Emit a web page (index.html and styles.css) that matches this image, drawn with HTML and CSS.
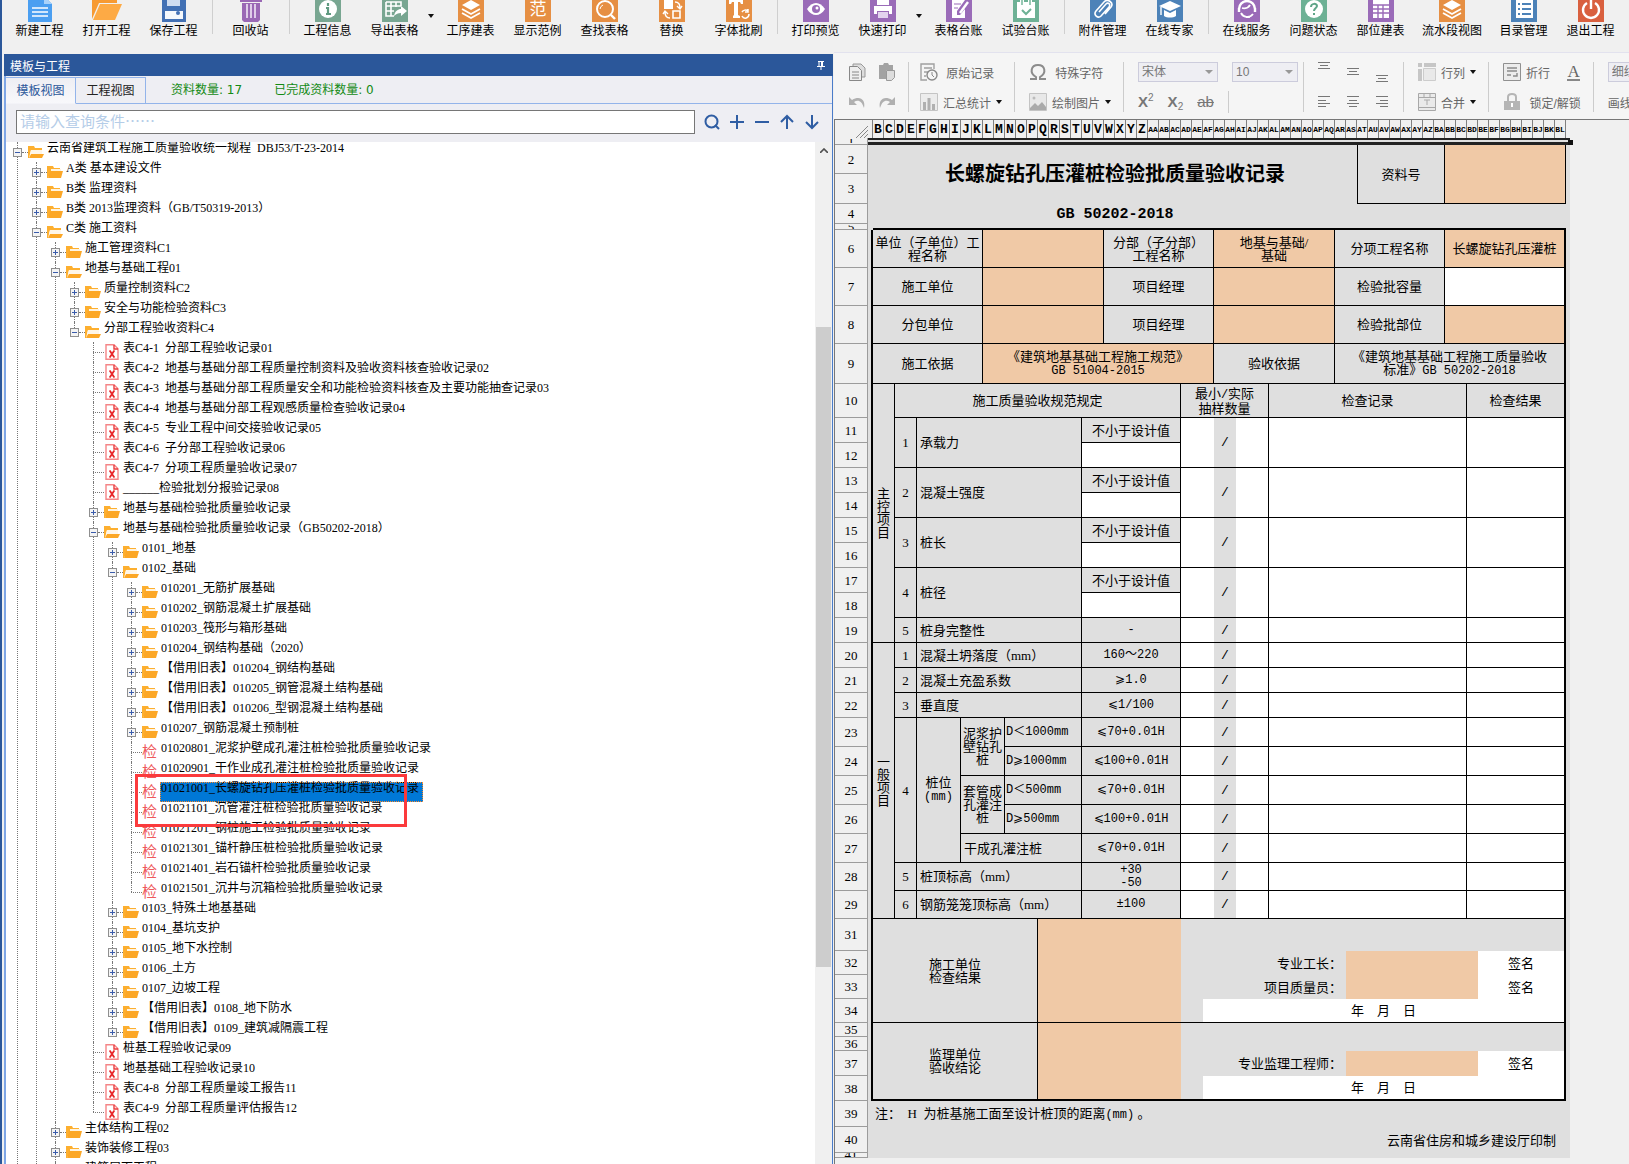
FILE: index.html
```
<!DOCTYPE html>
<html lang="zh-CN">
<head>
  <meta charset="utf-8">
  <title>工程资料管理</title>
  <link rel="stylesheet" href="styles.css">
</head>

<body>
  <svg class="defs" aria-hidden="true">
    <symbol id="folder" viewBox="0 0 16 14">
      <path d="M0 1h6l1 2h6v3H4L1 13H0z" fill="#fdaf2f"/>
      <path d="M4 4h10v3H4z" fill="#fff3df"/>
      <path d="M3 6h13l-2 7H1z" fill="#fca726"/>
    </symbol>
    <symbol id="folder-open" viewBox="0 0 16 14">
      <path d="M0 1h6l1 2h7v2H3L1 13H0z" fill="#fdaf2f"/>
      <path d="M3 5h11v4H2z" fill="#fff6e8"/>
      <path d="M3 9h13l-2 4H1z" fill="#fca726"/>
    </symbol>
    <symbol id="sheet-file" viewBox="0 0 16 16">
      <path d="M2 .7h8l4 4v10.600H2z" fill="#fff" stroke="#f58587" stroke-width="1.4"/>
      <path d="M10 1v4h4" fill="none" stroke="#ea3a3c" stroke-width="1.4"/>
      <path d="M6 7l4 6M10 7l-4 6" stroke="#e8262a" stroke-width="1.8"/>
      <path d="M5 7h2M9 7h2M5 13h2M9 13h2" stroke="#e8262a"/>
    </symbol>
    <symbol id="layers" viewBox="0 0 26 26">
      <path d="M13 4l9 5-9 5-9-5z" fill="#fff"/>
      <path d="M4 13l9 5 9-5M4 17l9 5 9-5" fill="none" stroke="#fff" stroke-width="1.8"/>
    </symbol>
  </svg>

  <header class="toolbar">
    <button class="tool"><svg viewBox="0 0 26 26"><path d="M1 0h16l8 8v18H1z" fill="#4b9ff1"/><path d="M17 0l8 8h-8z" fill="#a9d2fa"/><path d="M5 12h16M5 16h16M5 20h16" stroke="#fff" stroke-width="1.6"/></svg>新建工程</button>
    <button class="tool"><svg class="wide" viewBox="0 0 32 26"><path d="M1 0h10l3 3h12v4H8L1 23z" fill="#f79a32"/><path d="M9 8h22l-7 16H2z" fill="#fdaa45"/></svg>打开工程</button>
    <button class="tool"><svg viewBox="0 0 26 26"><path d="M1 1h22l2 3v22H1z" fill="#4270b4"/><path d="M6 1h13v9H6z" fill="#cfdcf0"/><path d="M4 15h18v8H4z" fill="#f5f8fc"/><path d="M17 15a2 2 0 1 1 0 4 2 2 0 0 1 0-4z" fill="#4270b4"/></svg>保存工程</button>
    <span class="tool-sep"></span>
    <button class="tool"><svg viewBox="0 0 26 26"><path d="M2 2h22v4H2zM4 7h18v17l-2 2H6l-2-2z" fill="#9a68b5"/><path d="M9 8v14M13 8v14M17 8v14" stroke="#f0e6f6" stroke-width="1.6"/></svg>回收站</button>
    <span class="tool-sep"></span>
    <button class="tool"><svg class="green" viewBox="0 0 26 26"><circle cx="13" cy="13" r="9" fill="#fff"/><path d="M13 7v3M11 12h2v6M11 18h5" fill="none" stroke="#5f9a80" stroke-width="2.2"/></svg>工程信息</button>
    <button class="tool"><svg class="green" viewBox="0 0 26 26"><path d="M4 6h15v4M4 6v14h8M4 10h15M4 15h8M9 6v14M14 6v5" fill="none" stroke="#fff" stroke-width="1.6"/><path d="M12 20c1-5 4-7 7-7v-3l6 5-6 5v-3c-3 0-5 1-7 3z" fill="#fff"/></svg>导出表格</button>
    <span class="tool-drop"><i class="caret"></i></span>
    <button class="tool"><svg class="orange" viewBox="0 0 26 26"><use href="#layers"/></svg>工序建表</button>
    <button class="tool"><svg class="orange" viewBox="0 0 26 26"><text x="13" y="19" text-anchor="middle" font-size="17" fill="#fff">范</text></svg>显示范例</button>
    <button class="tool"><svg class="orange" viewBox="0 0 26 26"><circle cx="13" cy="13" r="8" fill="none" stroke="#fff" stroke-width="2"/><path d="M19 19l4 4" stroke="#fff" stroke-width="2.4"/><path d="M8 13a5 5 0 0 1 3-4" fill="none" stroke="#fff"/></svg>查找表格</button>
    <button class="tool"><svg class="orange" viewBox="0 0 26 26"><path d="M5 4h9v9H5z" fill="#fff"/><path d="M14 15h7v7h-7z" fill="none" stroke="#fff" stroke-width="1.6"/><path d="M16 6c4 0 5 2 5 6M18 10l3 3 2-3M11 22c-4 0-5-2-5-6M4 18l2-3 3 3" fill="none" stroke="#fff" stroke-width="1.4"/></svg>替换</button>
    <button class="tool"><svg class="orange" viewBox="0 0 26 26"><path d="M3 4h14v4h-2l-1-2h-2v13l2 1v2H7v-2l1-1V6H6L5 8H3z" fill="#fff"/><path d="M22 15a4 4 0 0 0-6 1M23 18c0 4-5 6-7 2M22 13v3h-3" fill="none" stroke="#fff" stroke-width="1.5"/></svg>字体批刷</button>
    <span class="tool-sep"></span>
    <button class="tool"><svg class="purple" viewBox="0 0 26 26"><path d="M4 13c5-8 13-8 18 0-5 8-13 8-18 0z" fill="#fff"/><circle cx="13" cy="13" r="4" fill="#9a6bb8"/><circle cx="14" cy="12" r="1.5" fill="#fff"/></svg>打印预览</button>
    <button class="tool"><svg class="purple" viewBox="0 0 26 26"><path d="M7 4h12v5H7zM4 10h18v8h-3v-3H7v3H4z" fill="#fff"/><path d="M8 16h10v6H8z" fill="#e3d3ee"/></svg>快速打印</button>
    <span class="tool-drop"><i class="caret"></i></span>
    <button class="tool"><svg class="purple" viewBox="0 0 26 26"><path d="M6 4h13l-8 11v4h3l5-6v9H6z" fill="#fff"/><path d="M8 8h7M8 12h4" stroke="#9a6bb8" stroke-width="1.2"/><path d="M14 17l8-11" stroke="#fff" stroke-width="2.4"/></svg>表格台账</button>
    <button class="tool"><svg class="teal" viewBox="0 0 26 26"><path d="M4 6h18v16H4z" fill="#fff"/><path d="M9 3v6M17 3v6" stroke="#fff" stroke-width="4"/><path d="M9 3v6M17 3v6" stroke="#6db195" stroke-width="1.4"/><path d="M9 14l4 4 5-5" fill="none" stroke="#6db195" stroke-width="2"/></svg>试验台账</button>
    <span class="tool-sep"></span>
    <button class="tool"><svg class="blue" viewBox="0 0 26 26"><path d="M9 16l7-8c2-2 5 0 3 3l-8 9c-3 3-8-1-5-5l8-9c4-4 10 1 7 5l-6 7" fill="none" stroke="#fff" stroke-width="1.6"/></svg>附件管理</button>
    <button class="tool"><svg class="blue" viewBox="0 0 26 26"><path d="M13 5l11 5-11 5-11-5z" fill="#fff"/><path d="M7 14v6c3 2 9 2 12 0v-6l-6 3z" fill="#fff"/><path d="M4 11v8" stroke="#fff" stroke-width="1.4"/></svg>在线专家</button>
    <span class="tool-sep"></span>
    <button class="tool"><svg class="purple" viewBox="0 0 26 26"><path d="M5 13a8 8 0 0 1 16 0M5 12v4M21 12v4" fill="none" stroke="#fff" stroke-width="2.4"/><path d="M8 12c4 1 7-1 8-3M7 17c2 4 8 6 12 1M12 21h4" fill="none" stroke="#fff" stroke-width="1.8"/></svg>在线服务</button>
    <button class="tool"><svg class="teal" viewBox="0 0 26 26"><circle cx="13" cy="13" r="9" fill="#fff"/><path d="M10 11c0-4 6-4 6-1 0 2-3 2-3 5M13 17v2" fill="none" stroke="#5fa588" stroke-width="2"/></svg>问题状态</button>
    <button class="tool"><svg class="purple" viewBox="0 0 26 26"><path d="M5 4h16v18H5z" fill="#fff"/><path d="M5 9h16M5 13h16M5 17h16M10 9v13M15 9v13" stroke="#9a6bb8" stroke-width="1.4"/></svg>部位建表</button>
    <button class="tool tool-long"><svg class="orange" viewBox="0 0 26 26"><use href="#layers"/></svg>流水段视图</button>
    <button class="tool"><svg class="blue" viewBox="0 0 26 26"><path d="M5 4h17v18H5z" fill="#fff"/><path d="M7 8h2M7 13h2M7 18h2M11 8h9M11 13h9M11 18h9" stroke="#4c82b8" stroke-width="2"/></svg>目录管理</button>
    <button class="tool"><svg class="red" viewBox="0 0 26 26"><path d="M9 7a8 8 0 1 0 8 0M13 4v9" fill="none" stroke="#fff" stroke-width="2.4"/></svg>退出工程</button>
  </header>

  <main class="workspace">
    <section class="side">
      <div class="side-title">
        <span>模板与工程</span>
        <svg width="8" height="9" viewBox="0 0 8 9"><path d="M1 .5h6M2 0v5M5.500 0v5M0 5.500h8M4 5v4" stroke="#fff" fill="none"/><path d="M4 0h2v5H4z" fill="#fff"/></svg>
      </div>
      <div class="tabs">
        <button class="tab active">模板视图</button>
        <button class="tab">工程视图</button>
        <span class="count">资料数量: 17</span>
        <span class="count">已完成资料数量: 0</span>
      </div>
      <div class="search">
        <input type="text" placeholder="请输入查询条件……" aria-label="查询条件">
        <button class="mini"><svg viewBox="0 0 16 16"><circle cx="7.500" cy="7.500" r="6"/><path d="M11 11l4 4"/></svg></button>
        <button class="mini"><svg viewBox="0 0 16 16"><path d="M8 1v14M1 8h14"/></svg></button>
        <button class="mini"><svg viewBox="0 0 16 16"><path d="M1 8h14"/></svg></button>
        <button class="mini"><svg viewBox="0 0 16 16"><path d="M8 15V2M2 8l6-6 6 6"/></svg></button>
        <button class="mini"><svg viewBox="0 0 16 16"><path d="M8 1v13M2 8l6 6 6-6"/></svg></button>
      </div>

      <div class="tree-box">
        <ul class="tree">
          <li><div class="row"><button class="toggle"></button><svg><use href="#folder-open"/></svg><span>云南省建筑工程施工质量验收统一规程&nbsp; DBJ53/T-23-2014</span></div>
            <ul>
              <li><div class="row"><button class="toggle plus"></button><svg><use href="#folder"/></svg><span>A类 基本建设文件</span></div></li>
              <li><div class="row"><button class="toggle plus"></button><svg><use href="#folder"/></svg><span>B类 监理资料</span></div></li>
              <li><div class="row"><button class="toggle plus"></button><svg><use href="#folder"/></svg><span>B类 2013监理资料（GB/T50319-2013）</span></div></li>
              <li><div class="row"><button class="toggle"></button><svg><use href="#folder-open"/></svg><span>C类 施工资料</span></div>
                <ul>
                  <li><div class="row"><button class="toggle plus"></button><svg><use href="#folder"/></svg><span>施工管理资料C1</span></div></li>
                  <li><div class="row"><button class="toggle"></button><svg><use href="#folder-open"/></svg><span>地基与基础工程01</span></div>
                    <ul>
                      <li><div class="row"><button class="toggle plus"></button><svg><use href="#folder"/></svg><span>质量控制资料C2</span></div></li>
                      <li><div class="row"><button class="toggle plus"></button><svg><use href="#folder"/></svg><span>安全与功能检验资料C3</span></div></li>
                      <li class="last"><div class="row"><button class="toggle"></button><svg><use href="#folder-open"/></svg><span>分部工程验收资料C4</span></div>
                        <ul>
                          <li><div class="row leaf"><svg><use href="#sheet-file"/></svg><span>表C4-1&nbsp; 分部工程验收记录01</span></div></li>
                          <li><div class="row leaf"><svg><use href="#sheet-file"/></svg><span>表C4-2&nbsp; 地基与基础分部工程质量控制资料及验收资料核查验收记录02</span></div></li>
                          <li><div class="row leaf"><svg><use href="#sheet-file"/></svg><span>表C4-3&nbsp; 地基与基础分部工程质量安全和功能检验资料核查及主要功能抽查记录03</span></div></li>
                          <li><div class="row leaf"><svg><use href="#sheet-file"/></svg><span>表C4-4&nbsp; 地基与基础分部工程观感质量检查验收记录04</span></div></li>
                          <li><div class="row leaf"><svg><use href="#sheet-file"/></svg><span>表C4-5&nbsp; 专业工程中间交接验收记录05</span></div></li>
                          <li><div class="row leaf"><svg><use href="#sheet-file"/></svg><span>表C4-6&nbsp; 子分部工程验收记录06</span></div></li>
                          <li><div class="row leaf"><svg><use href="#sheet-file"/></svg><span>表C4-7&nbsp; 分项工程质量验收记录07</span></div></li>
                          <li><div class="row leaf"><svg><use href="#sheet-file"/></svg><span>______检验批划分报验记录08</span></div></li>
                          <li><div class="row"><button class="toggle plus"></button><svg><use href="#folder"/></svg><span>地基与基础检验批质量验收记录</span></div></li>
                          <li><div class="row"><button class="toggle"></button><svg><use href="#folder-open"/></svg><span>地基与基础检验批质量验收记录（GB50202-2018）</span></div>
                            <ul>
                              <li><div class="row"><button class="toggle plus"></button><svg><use href="#folder"/></svg><span>0101_地基</span></div></li>
                              <li><div class="row"><button class="toggle"></button><svg><use href="#folder-open"/></svg><span>0102_基础</span></div>
                                <ul>
                                  <li><div class="row"><button class="toggle plus"></button><svg><use href="#folder"/></svg><span>010201_无筋扩展基础</span></div></li>
                                  <li><div class="row"><button class="toggle plus"></button><svg><use href="#folder"/></svg><span>010202_钢筋混凝土扩展基础</span></div></li>
                                  <li><div class="row"><button class="toggle plus"></button><svg><use href="#folder"/></svg><span>010203_筏形与箱形基础</span></div></li>
                                  <li><div class="row"><button class="toggle plus"></button><svg><use href="#folder"/></svg><span>010204_钢结构基础（2020）</span></div></li>
                                  <li><div class="row"><button class="toggle plus"></button><svg><use href="#folder"/></svg><span>【借用旧表】010204_钢结构基础</span></div></li>
                                  <li><div class="row"><button class="toggle plus"></button><svg><use href="#folder"/></svg><span>【借用旧表】010205_钢管混凝土结构基础</span></div></li>
                                  <li><div class="row"><button class="toggle plus"></button><svg><use href="#folder"/></svg><span>【借用旧表】010206_型钢混凝土结构基础</span></div></li>
                                  <li><div class="row"><button class="toggle plus"></button><svg><use href="#folder"/></svg><span>010207_钢筋混凝土预制桩</span></div></li>
                                  <li><div class="row leaf"><b>检</b><span>01020801_泥浆护壁成孔灌注桩检验批质量验收记录</span></div></li>
                                  <li><div class="row leaf"><b>检</b><span>01020901_干作业成孔灌注桩检验批质量验收记录</span></div></li>
                                  <li><div class="row leaf"><b>检</b><span class="selected">01021001_长螺旋钻孔压灌桩检验批质量验收记录</span></div><div class="callout"></div></li>
                                  <li><div class="row leaf"><b>检</b><span>01021101_沉管灌注桩检验批质量验收记录</span></div></li>
                                  <li><div class="row leaf"><b>检</b><span>01021201_钢桩施工检验批质量验收记录</span></div></li>
                                  <li><div class="row leaf"><b>检</b><span>01021301_锚杆静压桩检验批质量验收记录</span></div></li>
                                  <li><div class="row leaf"><b>检</b><span>01021401_岩石锚杆检验批质量验收记录</span></div></li>
                                  <li class="last"><div class="row leaf"><b>检</b><span>01021501_沉井与沉箱检验批质量验收记录</span></div></li>
                                </ul>
                              </li>
                              <li><div class="row"><button class="toggle plus"></button><svg><use href="#folder"/></svg><span>0103_特殊土地基基础</span></div></li>
                              <li><div class="row"><button class="toggle plus"></button><svg><use href="#folder"/></svg><span>0104_基坑支护</span></div></li>
                              <li><div class="row"><button class="toggle plus"></button><svg><use href="#folder"/></svg><span>0105_地下水控制</span></div></li>
                              <li><div class="row"><button class="toggle plus"></button><svg><use href="#folder"/></svg><span>0106_土方</span></div></li>
                              <li><div class="row"><button class="toggle plus"></button><svg><use href="#folder"/></svg><span>0107_边坡工程</span></div></li>
                              <li><div class="row"><button class="toggle plus"></button><svg><use href="#folder"/></svg><span>【借用旧表】0108_地下防水</span></div></li>
                              <li class="last"><div class="row"><button class="toggle plus"></button><svg><use href="#folder"/></svg><span>【借用旧表】0109_建筑减隔震工程</span></div></li>
                            </ul>
                          </li>
                          <li><div class="row leaf"><svg><use href="#sheet-file"/></svg><span>桩基工程验收记录09</span></div></li>
                          <li><div class="row leaf"><svg><use href="#sheet-file"/></svg><span>地基基础工程验收记录10</span></div></li>
                          <li><div class="row leaf"><svg><use href="#sheet-file"/></svg><span>表C4-8&nbsp; 分部工程质量竣工报告11</span></div></li>
                          <li class="last"><div class="row leaf"><svg><use href="#sheet-file"/></svg><span>表C4-9&nbsp; 分部工程质量评估报告12</span></div></li>
                        </ul>
                      </li>
                    </ul>
                  </li>
                  <li><div class="row"><button class="toggle plus"></button><svg><use href="#folder"/></svg><span>主体结构工程02</span></div></li>
                  <li><div class="row"><button class="toggle plus"></button><svg><use href="#folder"/></svg><span>装饰装修工程03</span></div></li>
                  <li><div class="row"><button class="toggle plus"></button><svg><use href="#folder"/></svg><span>建筑屋面工程04</span></div></li>
                </ul>
              </li>
            </ul>
          </li>
        </ul>
        <div class="scrollbar">
          <svg width="8" height="5" viewBox="0 0 8 5"><path d="M0 5l4-4 4 4" fill="none" stroke="#505050" stroke-width="1.6"/></svg>
          <div class="thumb"></div>
        </div>
      </div>
    </section>

    <section class="editor">
      <div class="format-bar">
        <div class="group">
          <div class="line clip">
            <button><svg viewBox="0 0 18 18"><path d="M5 4V1h8l4 4v9h-3" fill="#ddd" stroke="#999"/><path d="M1.500 3.500h8l4 4v10h-12z" fill="#eee" stroke="#888"/><path d="M4 9h7M4 12h7M4 15h7" stroke="#888"/></svg></button>
            <button><svg viewBox="0 0 18 18"><path d="M1 2h4l1-2h4l1 2h4v5H8v9H1z" fill="#a3a3a3"/><path d="M8.500 7.500h8v7l-3 3h-5z" fill="#ddd" stroke="#999"/></svg></button>
          </div>
          <div class="line clip">
            <button><svg viewBox="0 0 18 18"><path d="M1 4v8h8L6 9c4-3 8-1 10 6 2-8-4-13-12-8z" fill="#b0b0b0"/></svg></button>
            <button><svg viewBox="0 0 18 18"><path d="M17 4v8H9l3-3C8 6 4 8 2 15 0 7 6 2 14 7z" fill="#b0b0b0"/></svg></button>
          </div>
        </div>
        <div class="group near">
          <div class="line"><button><svg viewBox="0 0 18 18"><path d="M7 17H1V1h13v5M4 5h8M4 9h4M4 13h2" fill="none" stroke="#a0a0a0" stroke-width="1.4"/><circle cx="12" cy="12" r="5" fill="#f5f5f5" stroke="#888" stroke-width="1.4"/><path d="M12 9v3l2 2" fill="none" stroke="#888"/></svg>&nbsp;原始记录</button></div>
          <div class="line"><button><svg viewBox="0 0 18 18"><path d="M.5.5h17v17H.5z" fill="#ececec" stroke="#c4c4c4"/><path d="M3 9h3v8H3zM7.500 5h3v12h-3zM12 11h3v6h-3z" fill="#b0b0b0"/></svg>汇总统计<i class="caret"></i></button></div>
        </div>
        <div class="group">
          <div class="line"><button><svg viewBox="0 0 18 18"><path d="M1 16h6v-2C0 10 2 2 9 2s9 8 2 12v2h6" fill="none" stroke="#8c8c8c" stroke-width="2"/></svg>&nbsp;特殊字符</button></div>
          <div class="line"><button><svg viewBox="0 0 18 18"><path d="M.5.5h17v17H.5z" fill="#e8e8e8" stroke="#c4c4c4"/><path d="M1 15l5-5 3 3 4-4 4 5v3H1z" fill="#aaa"/><circle cx="5" cy="5" r="1.500" fill="#bbb"/></svg>绘制图片<i class="caret"></i></button></div>
        </div>
        <div class="group fonts">
          <div class="line">
            <span class="select font-name"><select disabled aria-label="字体"><option>宋体</option></select></span>
            <span class="select font-size"><select disabled aria-label="字号"><option>10</option></select></span>
          </div>
          <div class="line marks">
            <button>X<sup>2</sup></button>
            <button>X<sub>2</sub></button>
            <button class="strike">ab</button>
            <span class="inner-sep"></span>
          </div>
        </div>
        <div class="group aligns">
          <div class="line">
            <button><svg class="a-top" viewBox="0 0 12 12"><path d="M0 .5h12M2 3.500h8M0 6.500h12"/></svg></button>
            <button><svg viewBox="0 0 12 12"><path d="M0 2.500h12M2 5.500h8M0 8.500h12"/></svg></button>
            <button><svg class="a-bottom" viewBox="0 0 12 12"><path d="M0 5.500h12M2 8.500h8M0 11.500h12"/></svg></button>
          </div>
          <div class="line">
            <button><svg viewBox="0 0 12 12"><path d="M0 .5h12M0 4.500h8M0 7.500h12M0 10.500h8"/></svg></button>
            <button><svg viewBox="0 0 12 12"><path d="M0 .5h12M2 4.500h8M0 7.500h12M2 10.500h8"/></svg></button>
            <button><svg viewBox="0 0 12 12"><path d="M0 .5h12M4 4.500h8M0 7.500h12M4 10.500h8"/></svg></button>
          </div>
        </div>
        <div class="group">
          <div class="line"><button><svg viewBox="0 0 18 18"><path d="M0 0h4v4H0zM6 0h12v4H6zM0 6h4v12H0z" fill="#c6c6c6"/><path d="M5.500 5.500h12v12h-12z" fill="#e9e9e9" stroke="#ccc"/></svg>行列<i class="caret"></i></button></div>
          <div class="line"><button><svg viewBox="0 0 18 18"><path d="M.5.500h17v17H.5zM.5 4.500h17M6 1v3M12 1v3M.5 14.500h17" fill="#eaeaea" stroke="#a8a8a8"/><path d="M6 7h6M9 7v5" stroke="#aaa"/></svg>合并<i class="caret"></i></button></div>
        </div>
        <div class="group">
          <div class="line"><button><svg viewBox="0 0 18 18"><path d="M.5.5h17v17H.5z" fill="#ececec" stroke="#909090"/><path d="M4 5h10M4 8h10M4 12h4M14 10v3h-4" fill="none" stroke="#8a8a8a" stroke-width="1.4"/></svg>折行</button><button class="font-color">A</button></div>
          <div class="line"><button><svg viewBox="0 0 18 18"><path d="M5 8V4c0-4 8-4 8 0v4" fill="none" stroke="#b5b5b5" stroke-width="2"/><path d="M1 8h16v9H1z" fill="#b5b5b5"/><path d="M9 10v4" stroke="#fff" stroke-width="2"/></svg>&nbsp;锁定/解锁</button></div>
        </div>
        <div class="group">
          <div class="line"><span class="select font-name"><select disabled aria-label="线型"><option>细线</option></select></span></div>
          <div class="line"><button>画线</button></div>
        </div>
      </div>

      <div class="sheet-box">
        <table class="sheet">
          <colgroup>
            <col class="c-head"><col class="c-left"><col class="c-unit" span="63"><col class="c-right">
          </colgroup>
          <tr class="letters">
            <td class="corner"><svg width="12" height="12" viewBox="0 0 12 12"><path d="M0 12L12 0M4 12l8-8M8 12l4-4" stroke="#888"/></svg></td>
            <th></th>
            <th>B</th><th>C</th><th>D</th><th>E</th><th>F</th><th>G</th><th>H</th><th>I</th><th>J</th><th>K</th><th>L</th><th>M</th><th>N</th><th>O</th><th>P</th><th>Q</th><th>R</th><th>S</th><th>T</th><th>U</th><th>V</th><th>W</th><th>X</th><th>Y</th><th>Z</th>
            <th class="two">AA</th><th class="two">AB</th><th class="two">AC</th><th class="two">AD</th><th class="two">AE</th><th class="two">AF</th><th class="two">AG</th><th class="two">AH</th><th class="two">AI</th><th class="two">AJ</th><th class="two">AK</th><th class="two">AL</th><th class="two">AM</th>
            <th class="two">AN</th><th class="two">AO</th><th class="two">AP</th><th class="two">AQ</th><th class="two">AR</th><th class="two">AS</th><th class="two">AT</th><th class="two">AU</th><th class="two">AV</th><th class="two">AW</th><th class="two">AX</th><th class="two">AY</th><th class="two">AZ</th>
            <th class="two">BA</th><th class="two">BB</th><th class="two">BC</th><th class="two">BD</th><th class="two">BE</th><th class="two">BF</th><th class="two">BG</th><th class="two">BH</th><th class="two">BI</th><th class="two">BJ</th><th class="two">BK</th><th class="two">BL</th>
            <th></th>
          </tr>
          <tr class="h7"><th><div class="cut">1</div></th><td class="ruler" colspan="65"><i></i></td></tr>
          <tr class="h29"><th>2</th><td rowspan="3"></td><td class="title" colspan="44" rowspan="2">长螺旋钻孔压灌桩检验批质量验收记录</td><td class="line-box first" colspan="8" rowspan="2">资料号</td><td class="line-box fill" colspan="11" rowspan="2"></td><td rowspan="3"></td></tr>
          <tr class="h30"><th>3</th></tr>
          <tr class="h20"><th>4</th><td class="code" colspan="44">GB 50202-2018</td><td colspan="19"></td></tr>
          <tr class="h6"><th><div class="cut">5</div></th><td></td><td class="frame-top" colspan="63"></td><td></td></tr>

          <tr class="h38 form"><th>6</th><td class="frame-left" rowspan="32"></td><td colspan="10">单位（子单位）工程名称</td><td class="fill" colspan="11"></td><td colspan="10">分部（子分部）<br>工程名称</td><td class="fill" colspan="11">地基与基础/<br>基础</td><td colspan="10">分项工程名称</td><td class="fill end" colspan="11">长螺旋钻孔压灌桩</td><td class="none" rowspan="32"></td></tr>
          <tr class="h38 form"><th>7</th><td colspan="10">施工单位</td><td class="fill" colspan="11"></td><td colspan="10">项目经理</td><td class="fill" colspan="11"></td><td colspan="10">检验批容量</td><td class="white end" colspan="11"></td></tr>
          <tr class="h38 form"><th>8</th><td colspan="10">分包单位</td><td class="fill" colspan="11"></td><td colspan="10">项目经理</td><td class="fill" colspan="11"></td><td colspan="10">检验批部位</td><td class="fill end" colspan="11"></td></tr>
          <tr class="h40 form"><th>9</th><td colspan="10">施工依据</td><td class="fill" colspan="21">《建筑地基基础工程施工规范》<br><span class="num">GB 51004-2015</span></td><td colspan="11">验收依据</td><td class="end" colspan="21">《建筑地基基础工程施工质量验收<br>标准》<span class="num">GB 50202-2018</span></td></tr>
          <tr class="h34 form"><th>10</th><td class="upright" colspan="2" rowspan="10">主<br>控<br>项<br>目</td><td colspan="26">施工质量验收规范规定</td><td colspan="8">最小<span class="num">/</span>实际<br>抽样数量</td><td colspan="18">检查记录</td><td class="end" colspan="9">检查结果</td></tr>

          <tr class="h25 form"><th>11</th><td colspan="2" rowspan="2">1</td><td class="name" colspan="15" rowspan="2">承载力</td><td colspan="9">不小于设计值</td><td class="white open" colspan="3" rowspan="2"></td><td class="open" colspan="2" rowspan="2">/</td><td class="white" colspan="3" rowspan="2"></td><td class="white" colspan="18" rowspan="2"></td><td class="white end" colspan="9" rowspan="2"></td></tr>
          <tr class="h25 form"><th>12</th><td class="white" colspan="9"></td></tr>
          <tr class="h25 form"><th>13</th><td colspan="2" rowspan="2">2</td><td class="name" colspan="15" rowspan="2">混凝土强度</td><td colspan="9">不小于设计值</td><td class="white open" colspan="3" rowspan="2"></td><td class="open" colspan="2" rowspan="2">/</td><td class="white" colspan="3" rowspan="2"></td><td class="white" colspan="18" rowspan="2"></td><td class="white end" colspan="9" rowspan="2"></td></tr>
          <tr class="h25 form"><th>14</th><td class="white" colspan="9"></td></tr>
          <tr class="h25 form"><th>15</th><td colspan="2" rowspan="2">3</td><td class="name" colspan="15" rowspan="2">桩长</td><td colspan="9">不小于设计值</td><td class="white open" colspan="3" rowspan="2"></td><td class="open" colspan="2" rowspan="2">/</td><td class="white" colspan="3" rowspan="2"></td><td class="white" colspan="18" rowspan="2"></td><td class="white end" colspan="9" rowspan="2"></td></tr>
          <tr class="h25 form"><th>16</th><td class="white" colspan="9"></td></tr>
          <tr class="h25 form"><th>17</th><td colspan="2" rowspan="2">4</td><td class="name" colspan="15" rowspan="2">桩径</td><td colspan="9">不小于设计值</td><td class="white open" colspan="3" rowspan="2"></td><td class="open" colspan="2" rowspan="2">/</td><td class="white" colspan="3" rowspan="2"></td><td class="white" colspan="18" rowspan="2"></td><td class="white end" colspan="9" rowspan="2"></td></tr>
          <tr class="h25 form"><th>18</th><td class="white" colspan="9"></td></tr>
          <tr class="h25 form"><th>19</th><td colspan="2">5</td><td class="name" colspan="15">桩身完整性</td><td class="num" colspan="9">-</td><td class="white open" colspan="3"></td><td class="open" colspan="2">/</td><td class="white" colspan="3"></td><td class="white" colspan="18"></td><td class="white end" colspan="9"></td></tr>

          <tr class="h25 form"><th>20</th><td class="upright" colspan="2" rowspan="10">一<br>般<br>项<br>目</td><td colspan="2">1</td><td class="name" colspan="15">混凝土坍落度（mm）</td><td class="num" colspan="9">160～220</td><td class="white open" colspan="3"></td><td class="open" colspan="2">/</td><td class="white" colspan="3"></td><td class="white" colspan="18"></td><td class="white end" colspan="9"></td></tr>
          <tr class="h25 form"><th>21</th><td colspan="2">2</td><td class="name" colspan="15">混凝土充盈系数</td><td class="num" colspan="9">⩾1.0</td><td class="white open" colspan="3"></td><td class="open" colspan="2">/</td><td class="white" colspan="3"></td><td class="white" colspan="18"></td><td class="white end" colspan="9"></td></tr>
          <tr class="h25 form"><th>22</th><td colspan="2">3</td><td class="name" colspan="15">垂直度</td><td class="num" colspan="9">⩽1/100</td><td class="white open" colspan="3"></td><td class="open" colspan="2">/</td><td class="white" colspan="3"></td><td class="white" colspan="18"></td><td class="white end" colspan="9"></td></tr>
          <tr class="h29 form"><th>23</th><td colspan="2" rowspan="5">4</td><td colspan="4" rowspan="5">桩位<br><span class="num">(mm)</span></td><td colspan="4" rowspan="2">泥浆护壁钻孔桩</td><td class="name size num" colspan="7">D＜1000mm</td><td class="num" colspan="9">⩽70+0.01H</td><td class="white open" colspan="3"></td><td class="open" colspan="2">/</td><td class="white" colspan="3"></td><td class="white" colspan="18"></td><td class="white end" colspan="9"></td></tr>
          <tr class="h29 form"><th>24</th><td class="name size num" colspan="7">D⩾1000mm</td><td class="num" colspan="9">⩽100+0.01H</td><td class="white open" colspan="3"></td><td class="open" colspan="2">/</td><td class="white" colspan="3"></td><td class="white" colspan="18"></td><td class="white end" colspan="9"></td></tr>
          <tr class="h29 form"><th>25</th><td colspan="4" rowspan="2">套管成孔灌注桩</td><td class="name size num" colspan="7">D＜500mm</td><td class="num" colspan="9">⩽70+0.01H</td><td class="white open" colspan="3"></td><td class="open" colspan="2">/</td><td class="white" colspan="3"></td><td class="white" colspan="18"></td><td class="white end" colspan="9"></td></tr>
          <tr class="h29 form"><th>26</th><td class="name size num" colspan="7">D⩾500mm</td><td class="num" colspan="9">⩽100+0.01H</td><td class="white open" colspan="3"></td><td class="open" colspan="2">/</td><td class="white" colspan="3"></td><td class="white" colspan="18"></td><td class="white end" colspan="9"></td></tr>
          <tr class="h29 form"><th>27</th><td class="name" colspan="11">干成孔灌注桩</td><td class="num" colspan="9">⩽70+0.01H</td><td class="white open" colspan="3"></td><td class="open" colspan="2">/</td><td class="white" colspan="3"></td><td class="white" colspan="18"></td><td class="white end" colspan="9"></td></tr>
          <tr class="h28 form"><th>28</th><td colspan="2">5</td><td class="name" colspan="15">桩顶标高（mm）</td><td class="num" colspan="9">+30<br>-50</td><td class="white open" colspan="3"></td><td class="open" colspan="2">/</td><td class="white" colspan="3"></td><td class="white" colspan="18"></td><td class="white end" colspan="9"></td></tr>
          <tr class="h28 form"><th>29</th><td colspan="2">6</td><td class="name" colspan="15">钢筋笼笼顶标高（mm）</td><td class="num" colspan="9">±100</td><td class="white open" colspan="3"></td><td class="open" colspan="2">/</td><td class="white" colspan="3"></td><td class="white" colspan="18"></td><td class="white end" colspan="9"></td></tr>

          <tr class="h32 form sign"><th>31</th><td class="who" colspan="15" rowspan="4">施工单位<br>检查结果</td><td class="fill base" colspan="13" rowspan="4"></td><td class="base" colspan="2" rowspan="4"></td><td class="end" colspan="33"></td></tr>
          <tr class="h24 form sign"><th>32</th><td class="role" colspan="13">专业工长：</td><td class="fill" colspan="12" rowspan="2"></td><td class="white end" colspan="8">签名</td></tr>
          <tr class="h24 form sign"><th>33</th><td class="role" colspan="13">项目质量员：</td><td class="white end" colspan="8">签名</td></tr>
          <tr class="h24 form sign"><th>34</th><td class="white end base date" colspan="33">年&emsp;月&emsp;日</td></tr>
          <tr class="h14 form sign"><th>35</th><td class="who bottom" colspan="15" rowspan="4">监理单位<br>验收结论</td><td class="fill bottom" colspan="13" rowspan="4"></td><td class="bottom" colspan="2" rowspan="4"></td><td class="end" colspan="33" rowspan="2"></td></tr>
          <tr class="h14 form sign"><th>36</th></tr>
          <tr class="h25 form sign"><th>37</th><td class="role" colspan="13">专业监理工程师：</td><td class="fill" colspan="12"></td><td class="white end" colspan="8">签名</td></tr>
          <tr class="h25 form sign"><th>38</th><td class="white end bottom date" colspan="33">年&emsp;月&emsp;日</td></tr>
          <tr class="h26"><th>39</th><td class="note" colspan="65">注：&ensp;H&ensp;为桩基施工面至设计桩顶的距离<span class="num">(mm)</span> 。</td></tr>
          <tr class="h26"><th>40</th><td class="issuer" colspan="65">云南省住房和城乡建设厅印制</td></tr>
          <tr class="h5"><th><div class="cut">41</div></th><td colspan="65"></td></tr>
        </table>
      </div>
    </section>
  </main>
</body>
</html>
```
FILE: styles.css
```
* {
  box-sizing: border-box;
}
body {
  margin: 0;
  height: 100vh;
  overflow: hidden;
  display: flex;
  flex-direction: column;
  background: #f0f0f0;
  border-left: 2px solid #2b579a;
  font-family: "Liberation Sans", "Noto Sans CJK SC", sans-serif;
  font-size: 12px;
  color: #000;
}
button {
  padding: 0;
  border: 0;
  background: none;
  font: inherit;
  color: inherit;
}
.defs {
  position: absolute;
  width: 0;
  height: 0;
}
.caret {
  border: 3px solid transparent;
  border-top: 4px solid #111;
  border-bottom: 0;
}

/* main toolbar */
.toolbar {
  height: 52px;
  flex: none;
  display: flex;
  align-items: flex-start;
  padding-left: 4px;
}
.tool {
  width: 67px;
  flex: none;
  margin-top: -4px;
  display: flex;
  flex-direction: column;
  align-items: center;
  line-height: 18px;
  white-space: nowrap;
}
.tool-long {
  width: 76px;
}
.tool svg {
  width: 26px;
  height: 26px;
}
.tool svg.wide {
  width: 32px;
}
.green { background: #78a691; }
.orange { background: #e68f43; }
.purple { background: #9a6bb8; }
.teal { background: #6db195; }
.blue { background: #4c82b8; }
.red { background: #d9603f; }
.tool-sep {
  width: 1px;
  height: 34px;
  margin: 0 4px 0 5px;
  background: #cfcfcf;
  flex: none;
}
.tool-drop {
  width: 9px;
  flex: none;
  padding-top: 14px;
  display: flex;
}

/* panels */
.workspace {
  flex: 1;
  min-height: 0;
  padding-left: 2px;
  display: grid;
  grid-template-columns: minmax(0, 829fr) minmax(0, 796fr);
}
.side {
  min-height: 0;
  margin-top: 2px;
  display: flex;
  flex-direction: column;
  border-left: 2px solid #7ea6e6;
  border-right: 1px solid #4a7cc9;
  background: #eeeef3;
}
.side-title {
  height: 22px;
  flex: none;
  margin: 0 -1px 0 -2px;
  padding: 0 8px 0 6px;
  display: flex;
  align-items: center;
  justify-content: space-between;
  background: #2b579a;
  color: #fff;
}
.tabs {
  height: 28px;
  flex: none;
  padding-top: 1px;
  display: flex;
  border-bottom: 1px solid #93b4ea;
}
.tab {
  width: 70px;
  height: 27px;
  padding-bottom: 3px;
  border: 1px solid #93b4ea;
  border-left-width: 0;
  color: #222;
}
.tab.active {
  border-bottom-color: #f3f3f8;
  color: #2b579a;
  background: linear-gradient(#eeeef3, #f8f8fb);
}
.count {
  margin-left: 25px;
  font-family: "DejaVu Sans", "Noto Sans CJK SC", sans-serif;
  line-height: 26px;
  color: #138a13;
}
.count + .count {
  margin-left: 32px;
}
.search {
  height: 38px;
  flex: none;
  padding: 0 8px 2px 10px;
  display: flex;
  align-items: center;
}
.search input {
  flex: 1;
  min-width: 0;
  height: 24px;
  margin-right: 4px;
  padding: 0 3px 4px;
  border: 1px solid #767676;
  background: #fff;
  font-family: "Noto Sans CJK SC", sans-serif;
  font-size: 15px;
}
.search input::placeholder {
  color: #b5cde8;
}
.mini {
  width: 25px;
  height: 16px;
}
.mini svg {
  width: 16px;
  height: 16px;
  fill: none;
  stroke: #2f5da3;
  stroke-width: 2;
}

/* tree */
.tree-box {
  flex: 1;
  min-height: 0;
  display: flex;
  overflow: hidden;
  background: #fff;
}
.tree {
  flex: 1;
  padding-left: 7px;
  font-family: "Liberation Serif", "Noto Sans CJK SC", serif;
}
.tree, .tree ul {
  margin: 0;
  list-style: none;
}
.tree ul {
  padding-left: 19px;
}
.tree li {
  position: relative;
}
.tree li::before {
  content: "";
  position: absolute;
  left: 4px;
  top: 0;
  bottom: 0;
  border-left: 1px dotted #777;
}
.tree li.last::before {
  bottom: auto;
  height: 10px;
}
.row {
  position: relative;
  height: 20px;
  display: flex;
  align-items: center;
  white-space: nowrap;
}
.row::before {
  content: "";
  order: 1;
  width: 6px;
  border-top: 1px dotted #777;
}
.row.leaf::before {
  width: 11px;
  margin-left: 4px;
}
.toggle {
  width: 9px;
  height: 9px;
  border: 1px solid #8f8f8f;
  background:
    linear-gradient(#3a5cab, #3a5cab) center / 5px 1px no-repeat,
    #f4f4f4;
}
.toggle.plus {
  background:
    linear-gradient(#3a5cab, #3a5cab) center / 5px 1px no-repeat,
    linear-gradient(#3a5cab, #3a5cab) center / 1px 5px no-repeat,
    #f4f4f4;
}
.row svg, .row b {
  order: 2;
  width: 16px;
  height: 16px;
}
.row b {
  font-size: 15px;
  font-weight: normal;
  line-height: 16px;
  color: #ee5a5c;
}
.row span {
  order: 3;
  height: 20px;
  margin-left: 2px;
  padding: 0 4px 0 1px;
  line-height: 13px;
}
.row .selected {
  background: #0078d7;
  outline: 1px dotted #ff8a28;
  outline-offset: -1px;
}
.callout {
  position: absolute;
  z-index: 2;
  left: 8px;
  top: -8px;
  width: 272px;
  height: 53px;
  border: 3px solid #fb3a3c;
}
.scrollbar {
  width: 17px;
  flex: none;
  padding-top: 6px;
  display: flex;
  flex-direction: column;
  align-items: center;
  background: #f0f0f0;
}
.scrollbar .thumb {
  width: 15px;
  height: 63%;
  margin-top: 174px;
  background: #cdcdcd;
}

/* format bar */
.editor {
  min-width: 0;
  overflow: hidden;
  display: flex;
  flex-direction: column;
  padding-left: 1px;
}
.format-bar {
  height: 68px;
  flex: none;
  display: flex;
  align-items: flex-start;
  border-top: 1px solid #e2e2ee;
  background: #f5f5f5;
  color: #666;
}
.group {
  height: 50px;
  flex: none;
  margin-top: 9px;
  padding: 0 12px 0 14px;
  display: flex;
  flex-direction: column;
  justify-content: space-between;
  border-right: 1px solid #ccc;
}
.group:last-child {
  border-right: 0;
}
.group.near {
  padding-left: 11px;
}
.line {
  height: 20px;
  display: flex;
  align-items: center;
}
.line button {
  display: flex;
  align-items: center;
  gap: 5px;
}
.line svg {
  width: 18px;
  height: 18px;
}
.clip {
  gap: 12px;
}
.select {
  position: relative;
}
.select::after {
  content: "";
  position: absolute;
  right: 5px;
  top: 8px;
  border: 4px solid transparent;
  border-top: 4px solid #999;
  border-bottom: 0;
}
.select select {
  width: 100%;
  height: 20px;
  padding: 0 3px;
  border: 1px solid #ccccdc;
  background: #eeeef3;
  appearance: none;
  font: inherit;
  color: #777;
  opacity: 1;
}
.font-name {
  width: 80px;
}
.font-size {
  width: 66px;
}
.fonts {
  padding-right: 5px;
}
.fonts .line {
  gap: 14px;
}
.marks button {
  gap: 0;
  font-size: 15px;
  font-weight: bold;
  line-height: 16px;
  color: #777;
}
.marks sup, .marks sub {
  font-size: 10px;
  font-weight: normal;
  line-height: 10px;
}
.marks sup {
  margin-bottom: 9px;
}
.marks sub {
  margin-top: 9px;
}
.marks .strike {
  font-weight: normal;
  text-decoration: line-through;
}
.inner-sep {
  width: 1px;
  height: 22px;
  background: #ccc;
}
.aligns {
  padding-right: 15px;
}
.aligns .line {
  gap: 17px;
}
.aligns svg {
  width: 12px;
  height: 12px;
  stroke: #777;
}
.aligns .a-top {
  margin-bottom: 8px;
}
.aligns .a-bottom {
  margin-top: 8px;
}
.line .font-color {
  margin-left: 17px;
  width: 13px;
  justify-content: center;
  border-bottom: 2px solid #888;
  font-family: "Liberation Serif", serif;
  font-size: 17px;
  line-height: 15px;
}

/* sheet */
.sheet-box {
  flex: 1;
  min-height: 0;
  overflow: hidden;
  border-top: 1px solid #777;
  border-left: 1px solid #777;
  margin-top: -1px;
}
.sheet {
  width: 735px;
  table-layout: fixed;
  border-collapse: separate;
  border-spacing: 0;
  font-family: "Liberation Serif", "Noto Sans CJK SC", serif;
  font-size: 13px;
  line-height: 13px;
  text-align: center;
}
.c-head { width: 33px; }
.c-left { width: 5px; }
.c-unit { width: 11px; }
.c-right { width: 4px; }
.h5 { height: 5px; }
.h6 { height: 6px; }
.h7 { height: 7px; }
.h14 { height: 14px; }
.h20 { height: 20px; }
.h24 { height: 24px; }
.h25 { height: 25px; }
.h26 { height: 26px; }
.h28 { height: 28px; }
.h29 { height: 29px; }
.h30 { height: 30px; }
.h32 { height: 32px; }
.h34 { height: 34px; }
.h38 { height: 38px; }
.h40 { height: 40px; }
.sheet td {
  padding: 0;
  background: #dfdfdf;
}
.sheet th {
  padding: 0;
  border-right: 1px solid #9c9c9c;
  border-bottom: 1px solid #9c9c9c;
  background: #f0f0f0;
  font-weight: normal;
}
.cut {
  height: 4px;
  line-height: 4px;
  overflow: hidden;
}
.letters {
  height: 18px;
}
.sheet .letters th {
  overflow: hidden;
  border-right: 1px solid #808080;
  border-bottom: 0;
  font-family: "Liberation Mono", monospace;
  font-size: 13px;
  font-weight: bold;
}
.sheet .letters .two {
  font-size: 8px;
}
.sheet .letters th:last-child {
  border: 0;
}
.sheet .corner {
  background: #f0f0f0;
  text-align: right;
  vertical-align: bottom;
}
.corner svg {
  display: block;
  margin-left: auto;
}
.sheet .ruler {
  position: relative;
  border-top: 2px solid #222;
  border-bottom: 3px solid #222;
}
.ruler i {
  position: absolute;
  right: -3px;
  top: 0;
  width: 5px;
  height: 5px;
  background: #111;
}
.sheet .title {
  font-size: 20px;
  font-weight: bold;
}
.sheet .code {
  font-family: "Liberation Mono", monospace;
  font-size: 15px;
  font-weight: bold;
}
.sheet .line-box {
  border-right: 1px solid #000;
  border-bottom: 1px solid #000;
}
.sheet .line-box.first {
  border-left: 1px solid #000;
}
.sheet .frame-top {
  border-bottom: 2px solid #000;
}
.form td {
  border-right: 1px solid #000;
  border-bottom: 1px solid #000;
}
.form .frame-left {
  border-right: 2px solid #000;
  border-bottom: 0;
}
.form .none {
  border: 0;
}
.form .end {
  border-right: 2px solid #000;
}
.form .open {
  border-right: 0;
  font-family: "Liberation Mono", monospace;
}
.sheet .fill {
  background: #f0c9a6;
}
.sheet .white {
  background: #fff;
}
.sheet .name {
  padding-left: 3px;
  text-align: left;
}
.sheet .size {
  padding-left: 1px;
}
.num {
  font-family: "Liberation Mono", "Noto Sans CJK SC", monospace;
  font-size: 12px;
}
.sign td {
  border-right: 0;
  border-bottom: 0;
}
.sign .who {
  border-right: 1px solid #000;
  border-bottom: 1px solid #000;
}
.sign .base {
  border-bottom: 1px solid #000;
}
.sign .bottom {
  border-bottom: 2px solid #000;
}
.sheet .role {
  padding-right: 4px;
  text-align: right;
}
.sheet .note {
  padding-left: 7px;
  text-align: left;
}
.sheet .issuer {
  padding-right: 14px;
  text-align: right;
}
```
